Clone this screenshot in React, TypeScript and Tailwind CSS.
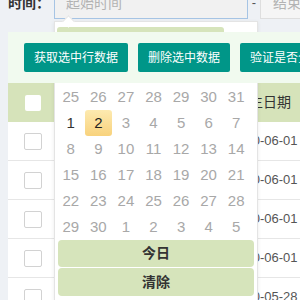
import React from 'react';

const font = "font-['Liberation_Sans','Noto_Sans_CJK_SC',sans-serif]";

const weeks: { d: number; cur?: boolean }[][] = [
  [{ d: 25 }, { d: 26 }, { d: 27 }, { d: 28 }, { d: 29 }, { d: 30 }, { d: 31 }],
  [{ d: 1, cur: true }, { d: 2, cur: true }, { d: 3 }, { d: 4 }, { d: 5 }, { d: 6 }, { d: 7 }],
  [{ d: 8 }, { d: 9 }, { d: 10 }, { d: 11 }, { d: 12 }, { d: 13 }, { d: 14 }],
  [{ d: 15 }, { d: 16 }, { d: 17 }, { d: 18 }, { d: 19 }, { d: 20 }, { d: 21 }],
  [{ d: 22 }, { d: 23 }, { d: 24 }, { d: 25 }, { d: 26 }, { d: 27 }, { d: 28 }],
  [{ d: 29 }, { d: 30 }, { d: 1 }, { d: 2 }, { d: 3 }, { d: 4 }, { d: 5 }],
];

const rows = ['2020-06-01', '2020-06-01', '2020-06-01', '2020-06-01', '2020-05-28'];

function DatePicker() {
  return (
    <div className="absolute left-[0px] top-[34px] z-10 w-[204px] h-[280px] bg-white border border-[#e4e4e4] shadow-[0_1px_4px_rgba(0,0,0,0.08)]">
      {/* arrow */}
      <div className="absolute left-[9px] -top-[5px] w-[9px] h-[9px] rotate-45 bg-white border-l border-t border-[#e4e4e4]" />
      {/* header (mostly hidden under the toolbar) */}
      <div className="ml-[2px] mt-[5px] w-[167px] h-[28px] rounded-t-[3px] bg-[#d6e4bb] flex items-center justify-center text-[13px] text-[#333]">
        2020年6月
      </div>
      <div className="ml-[2px] w-[193px] h-[29px] grid grid-cols-7 items-center text-center text-[13px] text-[#333]">
        {['日', '一', '二', '三', '四', '五', '六'].map((w) => (
          <span key={w}>{w}</span>
        ))}
      </div>
      <div className="ml-[2px] w-[193px] grid grid-cols-7">
        {weeks.flat().map((c, i) => (
          <div
            key={i}
            className={`h-[26px] flex items-center justify-center text-[15px] rounded-[3px] ${
              c.d === 2 && c.cur
                ? 'bg-gradient-to-b from-[#fdeab0] to-[#f8d27c] text-[#222]'
                : c.cur
                ? 'text-[#333]'
                : 'text-[#a8a8a8]'
            }`}
          >
            {c.d}
          </div>
        ))}
      </div>
      <div className="mx-[3px] flex flex-col gap-[1px]">
        <div className="h-[27px] rounded-[4px] bg-[#d6e4bb] flex items-center justify-center text-[14px] font-bold text-[#333]">
          今日
        </div>
        <div className="h-[28px] rounded-[4px] bg-[#d6e4bb] flex items-center justify-center text-[14px] font-bold text-[#333]">
          清除
        </div>
      </div>
    </div>
  );
}

export default function App() {
  return (
    <div className={`w-[300px] h-[300px] overflow-hidden bg-[#eef1f5] ${font}`}>
      {/* search row */}
      <div className="flex items-center h-[32px] -mt-[13px] pl-[8px] whitespace-nowrap">
        <span className="w-[46px] shrink-0 text-[14px] font-bold text-[#333]">时间：</span>
        <div className="relative shrink-0">
          <div className="w-[194px] h-[32px] bg-[#f1f1f1] border border-[#a6c4e4] flex items-center pl-[11px] text-[14px] text-[#b3b3b3]">
            起始时间
          </div>
          <DatePicker />
        </div>
        <span className="w-[12px] shrink-0 text-center text-[13px] text-[#555]">-</span>
        <div className="w-[120px] shrink-0 h-[32px] bg-[#f5f5f5] border border-[#dedede] flex items-center pl-[12px] text-[14px] text-[#b3b3b3]">
          结束时间
        </div>
      </div>

      {/* toolbar */}
      <div className="relative z-20 mt-[13px] ml-[8px] bg-[#f1faef] pl-[16px] py-[11px] flex gap-[10px] whitespace-nowrap">
        <button className="shrink-0 h-[29px] px-[10px] rounded-[2px] bg-[#009688] text-white text-[12px]">获取选中行数据</button>
        <button className="shrink-0 h-[29px] px-[10px] rounded-[2px] bg-[#009688] text-white text-[12px]">删除选中数据</button>
        <button className="shrink-0 h-[29px] px-[10px] rounded-[2px] bg-[#009688] text-white text-[12px]">验证是否全选</button>
      </div>

      {/* table */}
      <div className="ml-[8px] bg-white">
        <div className="h-[39px] flex items-center bg-[#d6e3ba] whitespace-nowrap">
          <div className="w-[50px] shrink-0 flex justify-center">
            <div className="w-[16px] h-[16px] rounded-[2px] bg-white" />
          </div>
          <div className="w-[177px] shrink-0" />
          <span className="shrink-0 text-[14px] text-[#333]">出生日期</span>
        </div>
        {rows.map((d, i) => (
          <div key={i} className="h-[39px] flex items-center border-b border-[#e6e6e6] whitespace-nowrap">
            <div className="w-[50px] shrink-0 flex justify-center">
              <div className="w-[18px] h-[17px] rounded-[2px] border border-[#d2d2d2] bg-white" />
            </div>
            <div className="w-[173px] shrink-0" />
            <span className="shrink-0 text-[13px] text-[#555]">{d}</span>
          </div>
        ))}
      </div>
    </div>
  );
}
